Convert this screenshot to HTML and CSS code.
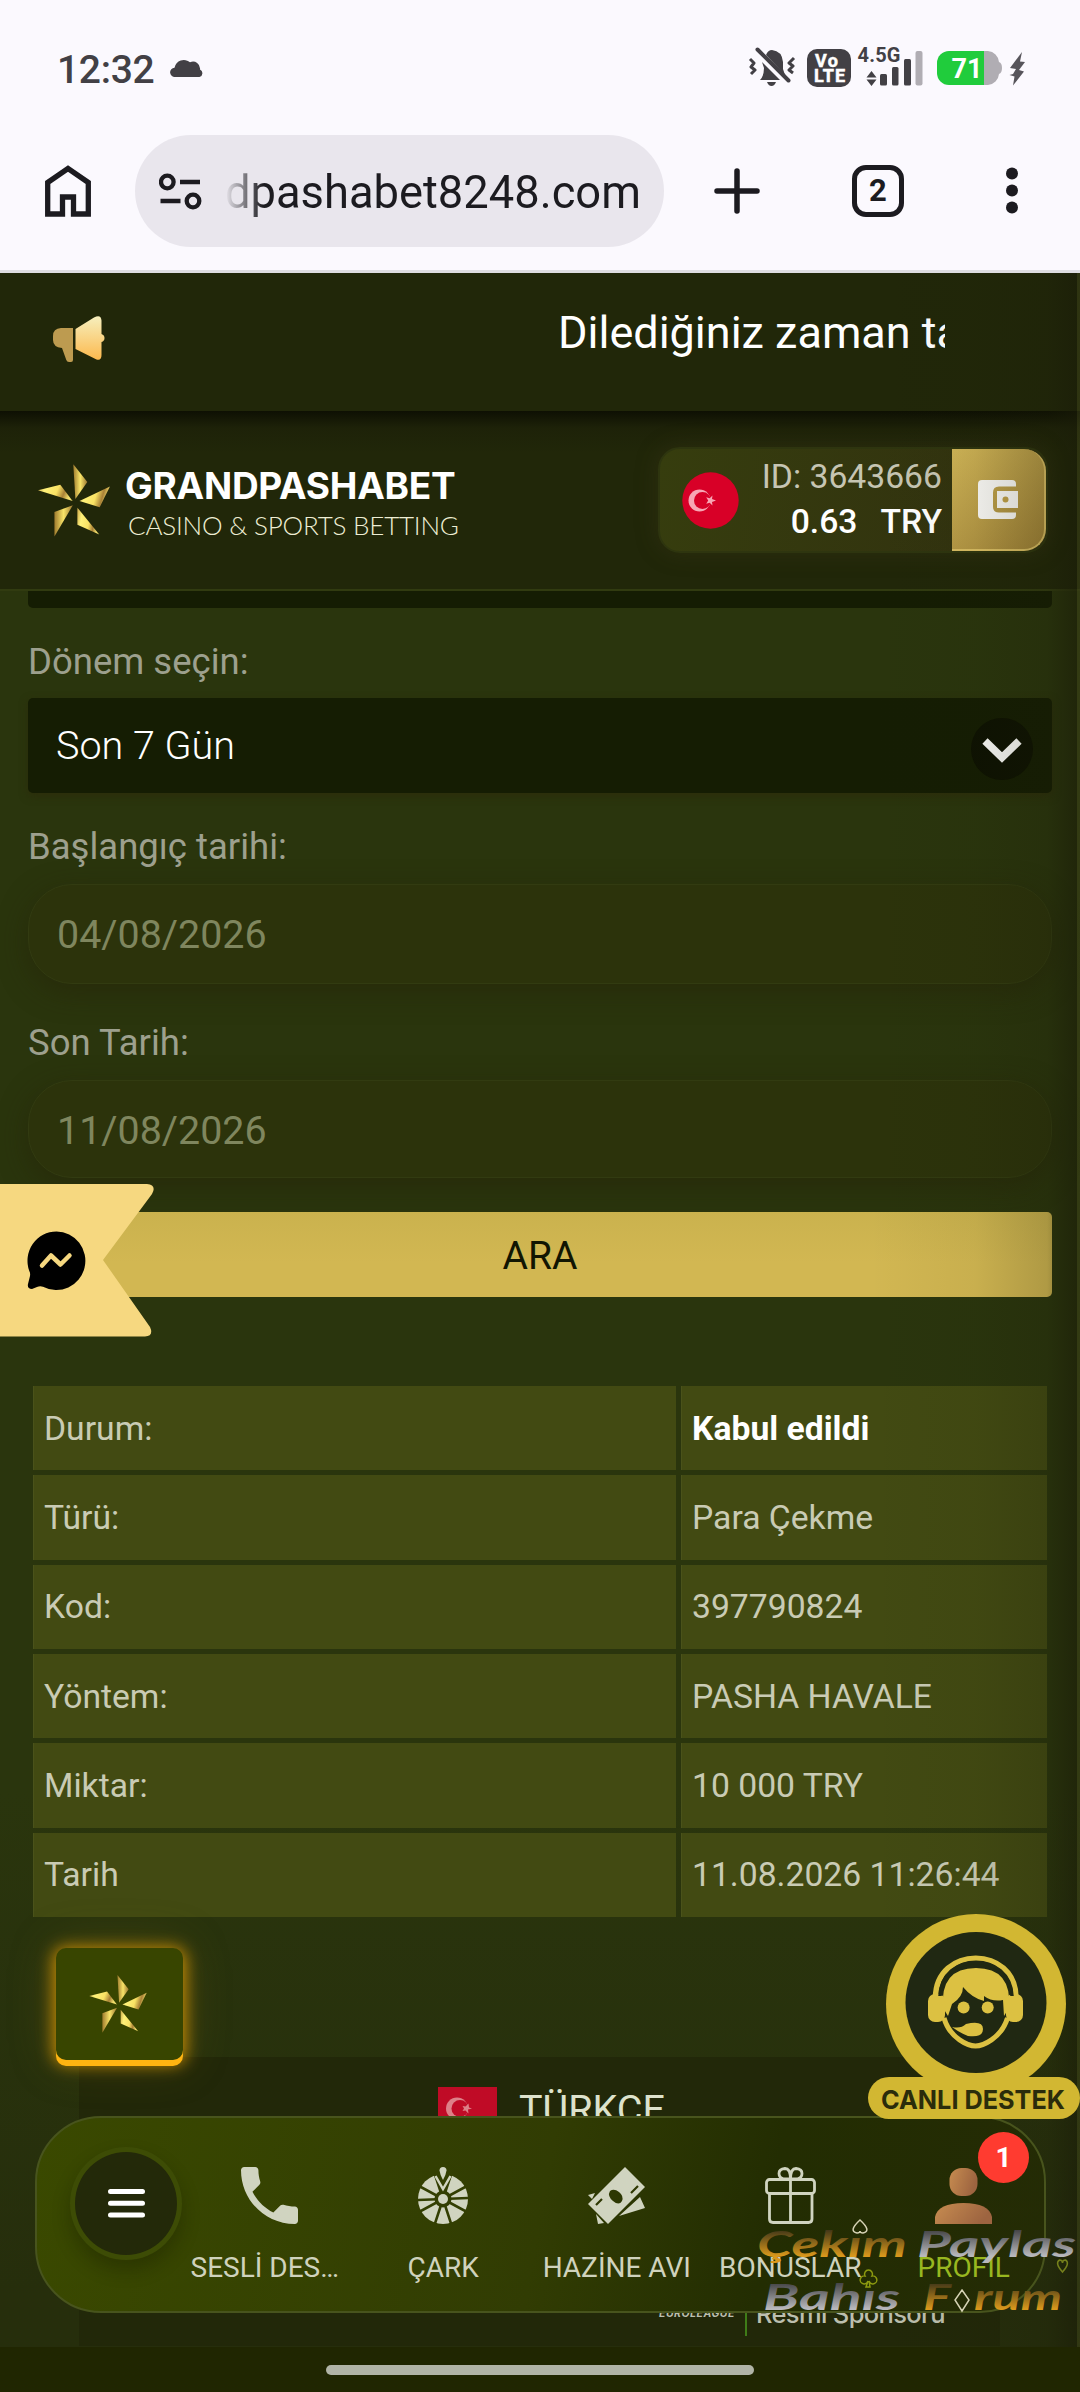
FILE: index.html
```html
<!DOCTYPE html>
<html lang="tr">
<head>
<meta charset="utf-8">
<meta name="viewport" content="width=1080">
<title>Grandpashabet</title>
<link rel="stylesheet" href="styles.css">
</head>
<body>
<svg class="defs" width="0" height="0" aria-hidden="true">
  <defs>
    <linearGradient id="gold" x1="0" y1="0" x2="1" y2="0.2">
      <stop offset="0" stop-color="#c9a548"/><stop offset=".25" stop-color="#fff27a"/><stop offset=".6" stop-color="#f9e264"/><stop offset=".82" stop-color="#a98136"/><stop offset="1" stop-color="#f3df6c"/>
    </linearGradient>
    <linearGradient id="gold2" x1="0" y1="0" x2="1" y2="0">
      <stop offset="0" stop-color="#a07c2e"/><stop offset=".5" stop-color="#f8e468"/><stop offset="1" stop-color="#9a7530"/>
    </linearGradient>
    <symbol id="star" viewBox="0 0 72.4 73">
      <path fill="url(#gold2)" d="M35.5 0 49.6 18 37.6 35Z"/>
      <path fill="url(#gold)" d="M72.3 22.3 62 43.3 41.7 37Z"/>
      <path fill="url(#gold)" d="M39.6 43.7 61.6 70.7 39.6 61Z"/>
      <path fill="url(#gold2)" d="M35 41.3 16.5 48V72.8Z"/>
      <path fill="url(#gold)" d="M0 26.3 22.4 20.7 34.8 37Z"/>
    </symbol>
  </defs>
</svg>
<div class="screen">
  <header class="browser">
    <div class="status">
      <span class="clock">12:32</span>
      <svg class="cloud" width="34" height="20" viewBox="0 0 34 20"><path fill="#424045" d="M5 19a4.6 4.6 0 0 1-.5-9.300A9.500 9.500 0 0 1 20 4.300a7 7 0 0 1 10 7.200A4 4 0 0 1 29.500 19Z"/></svg>
      <svg class="tray" width="284" height="44" viewBox="745 44 284 44">
        <g fill="#424045">
          <path d="M766 54q2-5 6-5 10 1 11 12v7q1 4 3 7ZM762 61 780 79H760q4-4 4-12Z"/>
          <path d="M767 81h9q-1.500 4-4.500 4t-4.500-4Z"/>
          <rect x="807" y="48" width="44" height="38" rx="10"/>
          <path d="M871.500 70 876.500 76.500H866.500ZM871.500 85 866.500 78.500H876.500Z"/>
          <rect x="880" y="73" width="7" height="11.500" rx="1.500"/><rect x="892" y="66" width="6.500" height="18.500" rx="1.500"/><rect x="904" y="58" width="7" height="26.500" rx="1.500"/>
        </g>
        <path d="M757.500 48.500 788.500 79.500" stroke="#424045" stroke-width="4" stroke-linecap="round"/>
        <path d="M750 58l4 4-3 4 4 3-4 4M794 57l-5 5 4 3-4 4 4 3" fill="none" stroke="#424045" stroke-width="3" stroke-linejoin="round"/>
        <rect x="915.500" y="50" width="7" height="34.500" rx="2" fill="#b0adb3"/>
        <path d="M984 50h4a12 12 0 0 1 11 11q3 1 3 6t-3 6a12 12 0 0 1-11 11h-4Z" fill="#b0adb3"/>
        <path d="M949 50h35v34h-35a12 12 0 0 1-12-12v-10a12 12 0 0 1 12-12Z" fill="#20cc3c"/>
        <path d="M1022 51 1010 67l6 1-3 5-3.500 1 5 1.500-1.500 9 11-14-5-1.500 6-8-5-.500Z" fill="#57555b"/>
        <text class="t-volte" x="826.500" y="65.500" text-anchor="middle" textLength="23">Vo</text>
        <text class="t-volte" x="829.500" y="81" text-anchor="middle" textLength="31">LTE</text>
        <text class="t-net" x="857.500" y="61" textLength="43">4.5G</text>
        <text class="t-bat" x="967" y="76.500" text-anchor="middle">71</text>
      </svg>
    </div>
    <div class="toolbar">
      <svg class="home" width="46" height="52" viewBox="0 0 46 52"><path d="M2.700 49V17.500L23 3.500 43.300 17.500V49H28.500V32H17.500V49Z" fill="none" stroke="#1c1b20" stroke-width="5.300"/></svg>
      <div class="omnibox">
        <svg width="43" height="37" viewBox="0 0 43 37"><g fill="none" stroke="#1c1b20" stroke-width="4.300"><circle cx="8.300" cy="9" r="6.300"/><path d="M21 9h20M1.500 28h20"/><circle cx="34" cy="28" r="6.300"/></g></svg>
        <span class="url">dpashabet8248.com</span>
      </div>
      <svg class="plus" width="46" height="46" viewBox="0 0 46 46"><path d="M23 3v40M3 23h40" stroke="#1c1b20" stroke-width="5.500" stroke-linecap="round"/></svg>
      <span class="tabs">2</span>
      <svg class="dots" width="12" height="48" viewBox="0 0 12 48"><g fill="#1c1b20"><circle cx="6" cy="6.500" r="6"/><circle cx="6" cy="23.500" r="6"/><circle cx="6" cy="40.500" r="6"/></g></svg>
    </div>
  </header>

  <section class="news">
    <svg width="52" height="47" viewBox="0 0 52 47">
      <defs><linearGradient id="horn" x1="0" y1="0" x2="0" y2="1"><stop offset="0" stop-color="#f6efbd"/><stop offset="1" stop-color="#fcb94e"/></linearGradient></defs>
      <path fill="#bd9b50" d="M8 12H20V44q0 2-2 2h-2q-2 0-2.700-2L9 32Q0 31 0 24V20Q0 12.500 8 12Z"/>
      <path fill="url(#horn)" d="M22.500 13 41 1.500q7-3.500 7.500 3V18q3 1 3 4t-3 4V39q0 6-5 4.500L22.500 33Z"/>
    </svg>
    <div class="ticker">Dilediğiniz zaman ta</div>
  </section>

  <section class="masthead">
    <svg class="brand-star" width="72" height="73"><use href="#star"/></svg>
    <div class="brand"><strong>GRANDPASHABET</strong><span>CASINO &amp; SPORTS BETTING</span></div>
    <div class="account">
      <svg width="57" height="57" viewBox="0 0 57 57"><circle cx="28.500" cy="28.500" r="28.200" fill="#d80027"/><circle cx="17.500" cy="28.500" r="11" fill="#f7a6b4"/><circle cx="20.500" cy="28.500" r="8.500" fill="#d80027"/><path fill="#f7a6b4" d="m34 28.500-4 1.500.5 3.500-2.800-2.800-3.500 1 2-3.200-2-3.200 3.500 1 2.800-2.800-.5 3.500Z"/></svg>
      <div class="who"><span>ID: 3643666</span><b>0.63<i></i>TRY</b></div>
      <div class="wallet"><svg width="41" height="39" viewBox="0 0 41 39"><path fill="#f8f7f4" d="M4 0h30q4 0 4 4v2.500H21q-6 0-6 6v14q0 6 6 6h17V35q0 4-4 4H4q-4 0-4-4V4q0-4 4-4Z"/><path fill="#f8f7f4" d="M19 11H40V28H19Z"/><circle cx="27.500" cy="19.500" r="3" fill="#bd9e48"/></svg></div>
    </div>
  </section>

  <main>
    <div class="cut"></div>
    <label>Dönem seçin:</label>
    <div class="select"><span>Son 7 Gün</span><svg width="62" height="62" viewBox="0 0 62 62"><circle cx="31" cy="31" r="31" fill="#0e1202"/><path d="M14 23 31 39.500 48 23" fill="none" stroke="#f8f8f5" stroke-width="7.500"/></svg></div>
    <label class="l2">Başlangıç tarihi:</label>
    <div class="date">04/08/2026</div>
    <label class="l3">Son Tarih:</label>
    <div class="date d2">11/08/2026</div>
    <button>ARA</button>
    <div class="details">
      <div>Durum:</div><div><b>Kabul edildi</b></div>
      <div>Türü:</div><div>Para Çekme</div>
      <div>Kod:</div><div>397790824</div>
      <div>Yöntem:</div><div>PASHA HAVALE</div>
      <div>Miktar:</div><div>10 000 TRY</div>
      <div>Tarih</div><div>11.08.2026 11:26:44</div>
    </div>
    <footer>
      <div class="lang"><svg width="59" height="40" viewBox="0 0 59 40"><path fill="#c00b26" d="M0 0h59v40H0Z"/><circle cx="19" cy="21.500" r="11" fill="#dd8088"/><circle cx="22" cy="21.500" r="8.500" fill="#c00b26"/><path fill="#dd8088" d="m34 21.500-4 1 .5 4-3-3-3 .5 1.500-2.500-1.500-2.500 3 .5 3-3 .5 4Z"/></svg><span>TÜRKÇE</span></div>
      <div class="sponsor"><i class="dot"></i><small>EUROLEAGUE</small><span>Resmi Sponsoru</span></div>
    </footer>
  </main>
  <div class="edge"></div>
  <div class="gesture"><i></i></div>

  <svg class="ribbon" width="154" height="153" viewBox="0 0 154 153">
    <path fill="#f6d880" d="M0 0H147q10 1 5 10L103 76 150 143q4 9-5 9.500H0Z"/>
    <path d="M56.500 47.500a29 29.300 0 1 1-13.500 55.300q-3-1-6 .2L32 105q-5 0-4-5l2-8q.5-3-.7-5A29 29.300 0 0 1 56.500 47.500Z"/>
    <path d="M42 81.500 51 71.500 60.500 80.500 69.500 71.500" fill="none" stroke="#f6d880" stroke-width="4.500" stroke-linecap="round" stroke-linejoin="round"/>
  </svg>
  <div class="starbtn"><svg width="58" height="58"><use href="#star"/></svg></div>

  <nav>
    <div class="menu"><svg width="37" height="29" viewBox="0 0 37 29"><path d="M2.500 2.500h32M2.500 14.300h32M2.500 26h32" stroke="#fff" stroke-width="5" stroke-linecap="round"/></svg></div>
    <a><svg width="57" height="57" viewBox="3 3 18 18"><path fill="#d0d4c0" d="M6.620 10.790c1.440 2.830 3.760 5.140 6.590 6.590l2.200-2.200c.27-.27.67-.36 1.020-.24 1.120.37 2.330.57 3.570.57.55 0 1 .45 1 1V20c0 .55-.45 1-1 1-9.390 0-17-7.610-17-17 0-.55.45-1 1-1h3.500c.55 0 1 .45 1 1 0 1.250.2 2.450.57 3.570.11.35.03.74-.25 1.020l-2.200 2.200z"/></svg><span>SESLİ DES…</span></a>
    <a><svg width="50" height="57" viewBox="0 0 50 57">
      <mask id="spokes"><path fill="#fff" d="M0 0h50v57H0Z"/><g stroke="#000" stroke-width="2.600"><path d="M15.500 3 34.500 61M34.500 3 15.500 61M0 18.500 50 45.500M50 18.500 0 45.500M0 33 50 31"/></g><circle cx="25" cy="32" r="8.500"/><path d="M14 4H36L25 29Z"/></mask>
      <circle cx="25" cy="32" r="25" fill="#d0d4c0" mask="url(#spokes)"/>
      <circle cx="25" cy="32" r="5" fill="#d0d4c0"/><path fill="#d0d4c0" d="M25 0a3.500 3.500 0 0 1 3.500 3.500Q28 8 25 13 22 8 21.500 3.500A3.500 3.500 0 0 1 25 0Z"/>
      <path d="M17.500 9 25 22 32.500 9" fill="none" stroke="#d0d4c0" stroke-width="2.500"/></svg><span>ÇARK</span></a>
    <a><svg width="58" height="57" viewBox="0 0 58 57"><g fill="#d0d4c0"><path d="M0 28 7 26 4 32ZM52 30 57 41 31 49ZM8 47 16 56 10 57Z"/><path fill-rule="evenodd" d="M37 0 57 20 20 57 0 37ZM22 24q-3 5 3 10t9 0q2-5-3-9t-9-1Z"/></g><path d="M8 38l6-6M43 26l7-7" stroke="#2e3803" stroke-width="2.200"/></svg><span>HAZİNE AVI</span></a>
    <a><svg width="51" height="57" viewBox="0 0 51 57"><g fill="none" stroke="#d0d4c0" stroke-width="2.800"><rect x="1.500" y="12.500" width="48" height="14" rx="3"/><path d="M4.500 27V52q0 3.500 3.500 3.500H43.500q3.500 0 3.500-3.500V27M25.500 12V55"/><path d="M25.500 12H19q-5-1-5-5.500T20 1.500q5.500 0 5.500 10.500Zm0 0H32q5-1 5-5.500T31 1.500q-5.500 0-5.500 10.500Z"/></g></svg><span>BONUSLAR</span></a>
    <a class="on"><svg width="57" height="57" viewBox="0 0 57 57"><defs><linearGradient id="skin" x1="0" x2="1" y1="0" y2=".3"><stop offset="0" stop-color="#c78c50"/><stop offset="1" stop-color="#9d6440"/></linearGradient></defs><rect x="14.500" y="1" width="28" height="28" rx="12" fill="url(#skin)"/><path fill="url(#skin)" d="M0 57V50Q3 36 28.500 36T57 50V57Z"/></svg><span>PROFİL</span><em>1</em></a>
  </nav>

  <svg class="support" width="212" height="206" viewBox="0 0 212 206">
    <circle cx="108" cy="90" r="90" fill="#d2b732"/><rect y="163" width="212" height="42" rx="21" fill="#d2b732"/>
    <circle cx="108" cy="88.500" r="70.500" fill="#202812"/>
    <g fill="#dcc142">
      <path d="M75 94Q72 54 108 54T141 94L136 102 135 86Q124 88 116 82V87Q104 84 95 73 95 83 84 90L80 102Z"/>
      <rect x="60" y="80" width="17" height="28" rx="7"/><rect x="138" y="80" width="17" height="28" rx="7"/>
      <circle cx="95.600" cy="93.500" r="6"/><circle cx="119.700" cy="93.500" r="6"/>
      <path d="M84 113Q93 115 98 110 115 106 115 115T100 122Q92 119 84 113Z"/>
    </g>
    <path d="M67.500 84C67.500 31 148 31 148 84" fill="none" stroke="#dcc142" stroke-width="5.500"/>
    <path d="M72 82C74 37 142 37 144 82" fill="none" stroke="#202812" stroke-width="3.500"/>
    <path d="M76 104C82 125 101 132 107.500 132S133 125 139.500 104" fill="none" stroke="#dcc142" stroke-width="5"/>
    <text x="13" y="195" textLength="184" lengthAdjust="spacingAndGlyphs">CANLI DESTEK</text>
  </svg>

  <svg class="mark" width="330" height="130" viewBox="750 2210 330 130">
    <defs>
      <linearGradient id="wg" x1="0" y1="0" x2="0" y2="1"><stop offset=".2" stop-color="#3d3418"/><stop offset=".8" stop-color="#d9981c"/></linearGradient>
      <linearGradient id="ws" x1="0" y1="0" x2="0" y2="1"><stop offset=".2" stop-color="#404042"/><stop offset=".8" stop-color="#b9b9bd"/></linearGradient>
    </defs>
    <g lengthAdjust="spacingAndGlyphs">
      <text x="757" y="2257" fill="url(#wg)" textLength="150" lengthAdjust="spacingAndGlyphs">Çekım</text>
      <text x="917" y="2257" fill="url(#ws)" textLength="159" lengthAdjust="spacingAndGlyphs">Paylas</text>
      <text x="763" y="2310" fill="url(#ws)" textLength="137" lengthAdjust="spacingAndGlyphs">Bahıs</text>
      <text x="923" y="2310" fill="url(#wg)" textLength="28" lengthAdjust="spacingAndGlyphs">F</text>
      <text x="974" y="2310" fill="url(#wg)" textLength="88" lengthAdjust="spacingAndGlyphs">rum</text>
    </g>
    <g fill="none" stroke-width="1.500">
      <path stroke="#d5d2b4" d="M860 2220q-12 11-3 13 3 0 3-2 0 2 3 2 9-2-3-13ZM962 2290l7 10-7 11-7-11Z"/>
      <path stroke="#8d9a10" d="M868 2281a4 4 0 1 1-3-5 4 4 0 1 1 7 0 4 4 0 1 1-3 5l1 6h-4Z"/>
      <path stroke="#75801c" d="M1062.500 2272q-8-9-3-12 3 0 3 3 0-3 3-3 5 3-3 12Z"/>
    </g>
  </svg>
</div>
</body>
</html>
```
FILE: styles.css
```css
* { box-sizing: border-box; }
body { margin: 0; font-family: Roboto, "Liberation Sans", sans-serif; }
svg { display: block; flex: none; }
.defs { position: absolute; }
.screen { position: relative; width: 1080px; height: 2392px; overflow: hidden; background: #2a350d; }

/* browser chrome */
.browser { height: 273px; background: #fbf9fe; border-bottom: 3px solid #dedde1; }
.status { display: flex; align-items: center; height: 135px; padding: 4px 51px 0 57px; }
.clock { font-size: 39px; font-weight: 500; color: #424045; letter-spacing: -.3px; }
.cloud { margin: -3px 0 0 16px; }
.tray { margin: -6px 0 0 auto; }
.t-volte, .t-net, .t-bat { font-weight: 700; }
.t-volte { font-size: 18px; fill: #fff; stroke: #fff; stroke-width: .5px; }
.t-net { font-size: 20px; fill: #424045; }
.t-bat { font-size: 27px; fill: #fff; }
.toolbar { display: flex; align-items: center; height: 112px; padding-left: 45px; }
.omnibox { display: flex; align-items: center; width: 529px; height: 112px; margin-left: 44px; padding-left: 24px; border-radius: 56px; background: #e9e6ed; }
.url { margin: 2px 0 0 23px; font-size: 45.3px; color: #1c1b20; background: linear-gradient(90deg, rgba(28,27,32,0), #1c1b20 38px); -webkit-background-clip: text; background-clip: text; color: transparent; }
.plus { margin-left: 50px; }
.tabs { width: 52px; height: 52px; margin-left: 92px; border: 5.5px solid #1c1b20; border-radius: 14px; font-size: 31px; font-weight: 700; line-height: 42px; text-align: center; color: #1c1b20; }
.dots { margin-left: 102px; }

/* announcement and logo bars */
.news { display: flex; height: 138px; padding: 43px 0 0 53px; background: #212709; }
.ticker { width: 387px; height: 70px; margin: -11px 0 0 453px; overflow: hidden; white-space: nowrap; font-size: 45px; line-height: 56px; color: #fff; }
.masthead { display: flex; align-items: center; height: 180px; padding-left: 38px; border-bottom: 2px solid #313b10; background: linear-gradient(#0e1003, rgba(26,29,8,.5) 17px, transparent 42px), #212709; }
.brand { display: flex; flex-direction: column; width: 340px; margin: 10px 0 0 15px; white-space: nowrap; }
.brand strong { font: 700 37px/40px Inter, sans-serif; letter-spacing: -.25px; color: #fff; }
.brand span { margin: -1px 0 0 3px; font: 300 26px/40px Lato, sans-serif; color: #eeeed4; letter-spacing: -.2px; }
.account { display: flex; align-items: center; width: 390px; height: 106px; margin-left: 193px; padding-left: 22px; border: 2px solid #2e350f; border-radius: 22px; background: linear-gradient(100deg, #363d0e, #31300f); box-shadow: 0 0 22px rgba(70,60,30,.35); }
.who { display: flex; flex-direction: column; width: 203px; margin-top: -3px; align-items: flex-end; font-size: 33.7px; line-height: 45px; color: #c6c5b3; white-space: nowrap; }
.who b { font-weight: 500; color: #fff; }
.who i { display: inline-block; width: 23px; }
.wallet { display: flex; align-items: center; justify-content: center; width: 94px; height: 102px; margin-left: 10px; border-right: 2px solid #d8bc62; border-bottom: 2px solid #d8bc62; border-radius: 0 22px 22px 0; background: linear-gradient(135deg, #d0b557, #9e8036); }

/* search form */
main { padding: 0 28px; height: 1756px; overflow: hidden; background: linear-gradient(#2a350d 1200px, #262e0c 1700px); }
.cut { height: 17px; border-radius: 0 0 5px 5px; background: #151d03; }
label { display: block; height: 50px; margin-top: 29px; font-size: 36.5px; line-height: 50px; color: #9da08e; }
.select { display: flex; align-items: center; justify-content: space-between; height: 95px; margin-top: 11px; padding: 6px 19px 0 28px; border-radius: 5px; background: #151d03; color: #fff; font-size: 39.5px; font-weight: 300; box-shadow: 0 3px 8px rgba(45,40,10,.6); }
.select span { margin-top: -7px; }
.date { height: 100px; margin-top: 12px; padding-left: 28px; border: 1.5px solid #323b11; border-radius: 44px; background: #2c330b; box-shadow: 0 8px 28px rgba(38,36,8,.6); font-size: 39.4px; line-height: 99px; color: #7f865e; }
.l3 { margin-top: 34px; }
.d2 { height: 98px; margin-top: 12px; }
button { display: block; width: 1024px; height: 85px; margin: 34px 0 89px; padding: 3px 0 0; border: 0; border-radius: 5px; background: linear-gradient(#cab24e, #d2b752 60%); font: 400 39px Roboto, sans-serif; color: #111502; }
.details { display: grid; grid-template-columns: 643px 366px; grid-template-rows: repeat(6, 1fr); gap: 5px; width: 1014px; height: 531px; margin-left: 5px; font-size: 33.7px; color: #c9cbb4; }
.details div { display: flex; align-items: center; padding-left: 10px; background: #424a12; border-left: 1px solid #4a521a; }
.details b { color: #fff; }
footer { height: 289px; margin: 140px 52px 0 51px; padding-top: 30px; background: #222809; }
.lang { display: flex; gap: 22px; padding-left: 359px; font-size: 39.5px; line-height: 45px; color: #dde2cc; }
.sponsor { display: flex; align-items: center; margin-top: 160px; padding-left: 41px; color: #bcbfae; white-space: nowrap; }
.dot { width: 17px; height: 17px; margin-top: -22px; border-radius: 50%; background: #d0d4c0; }
.sponsor small { width: 88px; margin-left: 522px; border-right: 2px solid #3f7c18; font: italic 700 10.500px/44px Inter, sans-serif; letter-spacing: .5px; }
.sponsor span { margin-left: 9px; font: 500 25.500px/40px Inter, sans-serif; letter-spacing: -.65px; }
.edge { position: absolute; top: 273px; right: 0; width: 300px; height: 2074px; background: linear-gradient(90deg, rgba(26,28,8,0) 30%, rgba(26,28,8,.05) 65%, rgba(26,28,8,.19) 89%, rgba(26,28,8,.6) 99%, rgba(60,65,25,.5) 99%); }
.gesture { display: flex; align-items: center; justify-content: center; height: 45px; background: #202601; }
.gesture i { width: 428px; height: 10px; border-radius: 5px; background: #b1b4a7; }

/* floating controls */
.ribbon { position: absolute; left: 0; top: 1183.5px; }
.starbtn { position: absolute; left: 56px; top: 1948px; display: flex; width: 127px; height: 112px; padding-right: 4px; align-items: center; justify-content: center; border-radius: 10px; background: #384500; box-shadow: 0 6px 0 #ffb411, 0 2px 16px 3px #c28a05, 0 0 45px rgba(110,95,20,.45); }
nav { position: absolute; left: 35px; top: 2116px; display: flex; width: 1011px; height: 197px; padding-left: 33px; border: 2px solid #48541d; border-radius: 66px; background: linear-gradient(100deg, #3a4900, #313c03 50%, #232d02 72%, #242b05); }
.menu { display: flex; flex: none; width: 112px; height: 113px; margin: 29px 0 0; align-items: center; justify-content: center; border: 5px solid #3d4c05; border-radius: 50%; background: #232909; box-shadow: 0 10px 18px rgba(15,20,0,.3); }
nav a { position: relative; display: flex; flex: none; flex-direction: column; align-items: center; width: 173.500px; padding-top: 49px; font-size: 28px; line-height: 40px; color: #cfd2bd; white-space: nowrap; }
nav a span { margin-top: 24px; }
nav .menu + a { margin-left: 1px; }
nav .menu + a span { margin-left: -10px; }
nav .on { color: #98b720; }
nav em { position: absolute; left: 101px; top: 14px; width: 51px; height: 51px; border-radius: 50%; background: #ff3b30; color: #fff; font-style: normal; font-weight: 700; line-height: 52px; text-align: center; }
.support { position: absolute; left: 868px; top: 1914px; }
.support text { font: 700 26px Inter, sans-serif; fill: #2b2c0b; }
.mark { position: absolute; left: 750px; top: 2210px; }
.mark text { font: italic 700 37px Lato, sans-serif; }
```
